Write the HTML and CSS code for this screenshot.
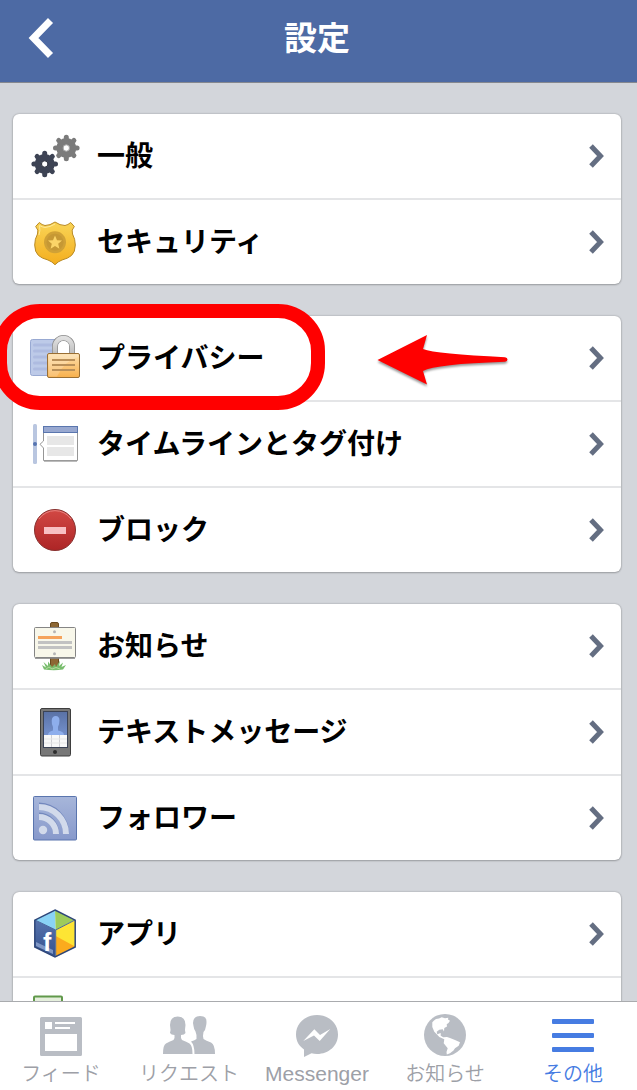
FILE: index.html
```html
<!DOCTYPE html>
<html lang="ja">
<head>
  <meta charset="UTF-8" />
  <meta name="viewport" content="width=device-width, initial-scale=1.0" />
  <title>設定</title>
  <link rel="stylesheet" href="styles.css">
</head>
<body>
  <!-- shared symbols -->
  <svg class="defs" width="0" height="0" aria-hidden="true">
    <symbol id="chevron" viewBox="0 0 15 24">
      <path d="M2 2 11.5 12 2 22" fill="none" stroke="#646e82" stroke-width="5"/>
    </symbol>
    <!-- 8 teeth round a 26px gear -->
    <symbol id="gear" viewBox="-14 -14 28 28">
      <circle r="10"/>
      <path d="M0-10.800V10.800M-10.800 0H10.800M-7.600-7.600 7.600 7.600M7.600-7.600-7.600 7.600" stroke="currentColor" stroke-width="5" stroke-linecap="round"/>
    </symbol>
    <linearGradient id="g-gold" x1="0" y1="0" x2="0" y2="1"><stop offset="0" stop-color="#f9d457"/><stop offset="1" stop-color="#f4ae1e"/></linearGradient>
    <linearGradient id="g-lock" x1="0" y1="0" x2="0" y2="1"><stop offset="0" stop-color="#fde0ae"/><stop offset="1" stop-color="#f8b04c"/></linearGradient>
    <linearGradient id="g-steel" x1="0" y1="0" x2="0" y2="1"><stop offset="0" stop-color="#e0e0e0"/><stop offset="1" stop-color="#bcbcbc"/></linearGradient>
    <linearGradient id="g-red" x1="0" y1="0" x2="0" y2="1"><stop offset="0" stop-color="#d24844"/><stop offset="1" stop-color="#ad2526"/></linearGradient>
    <linearGradient id="g-rss" x1="0" y1="0" x2="0" y2="1"><stop offset="0" stop-color="#a7b6da"/><stop offset="1" stop-color="#8799cb"/></linearGradient>
    <linearGradient id="g-screen" x1="0" y1="0" x2="0" y2="1"><stop offset="0" stop-color="#5a72a6"/><stop offset="1" stop-color="#7490cc"/></linearGradient>
    <linearGradient id="g-cube" x1="0" y1="0" x2="0" y2="1"><stop offset="0" stop-color="#5673ad"/><stop offset="1" stop-color="#34518d"/></linearGradient>
  </svg>

  <header class="header">
    <button class="back-btn" aria-label="戻る">
      <svg width="26" height="42" viewBox="0 0 26 42"><path d="M22.500 3.500 5.500 21 22.500 38.500" fill="none" stroke="#fff" stroke-width="7"/></svg>
    </button>
    <h1>設定</h1>
  </header>

  <main class="settings">
    <nav class="card">
      <a class="row" href="#">
        <svg class="icon" viewBox="0 0 50 50">
          <use class="gear-light" href="#gear" x="22.300" y="3" width="28" height="28"/>
          <circle cx="36.300" cy="17" r="3.200" fill="#fff" stroke="#a5a5a5"/>
          <use class="gear-dark" href="#gear" x="0.700" y="19" width="28" height="28"/>
          <circle cx="14.700" cy="33" r="3.200" fill="#fff" stroke="#272b38"/>
        </svg>
        <span class="label">一般</span>
        <svg class="chevron"><use href="#chevron"/></svg>
      </a>
      <a class="row" href="#">
        <svg class="icon" viewBox="0 0 50 50">
          <path d="M25 5Q20 8.500 15 8.500 12 8 9.300 5.500L5.700 9.500Q9 13 7.500 17 4.700 22 4.700 28 4.700 35 8.500 38.500 12 41.500 18 43 22 44.500 25 47.700 28 44.500 32 43 38 41.500 41.500 38.500 45.300 35 45.300 28 45.300 22 42.500 17 41 13 44.300 9.500L40.700 5.500Q38 8 35 8.500 30 8.500 25 5Z" fill="url(#g-gold)" stroke="#b98a24"/>
          <path d="M25 7Q20 10 15 10.500 12 10 9.500 8.500 10.500 14 9 18" fill="none" stroke="#fde99b"/>
          <circle cx="25" cy="25.300" r="11" fill="#d0a136"/>
          <circle cx="25" cy="25.300" r="8.500" fill="#c69834"/>
          <path d="M25 18.500 27 23.200 32 23.600 28.200 26.800 29.400 31.800 25 29.100 20.600 31.800 21.800 26.800 18 23.600 23 23.200Z" fill="#fbd468"/>
        </svg>
        <span class="label">セキュリティ</span>
        <svg class="chevron"><use href="#chevron"/></svg>
      </a>
    </nav>

    <nav class="card">
      <a class="row" href="#">
        <svg class="icon" viewBox="0 0 50 50">
          <rect x=".5" y="6.500" width="30" height="36" rx="2" fill="#bdcae8" stroke="#98a9d2"/>
          <path d="M4.500 12H24M4.500 18H24M4.500 24H24M4.500 30H24M4.500 36H24" stroke="#aebbe0" stroke-width="3" stroke-linecap="round"/>
          <path d="M25 22V13.500A8.500 8.500 0 0 1 42 13.500V22" fill="none" stroke="#8c8c8c" stroke-width="6"/>
          <path d="M25 22V13.500A8.500 8.500 0 0 1 42 13.500V22" fill="none" stroke="url(#g-steel)" stroke-width="4.500"/>
          <path d="M28 20V13.500A5.500 5.500 0 0 1 39 13.500V20Z" fill="#fff"/>
          <rect x="17.500" y="20.500" width="32" height="24" rx="1.500" fill="url(#g-lock)" stroke="#9a6f34"/>
          <path d="M18.500 21.500H48.500V24Q34 28 27 43.500H18.500Z" fill="#fff" opacity=".2"/>
          <path d="M22 27H45M22 32H45M22 37H45" stroke="#b98f58" stroke-width="1.800"/>
        </svg>
        <span class="label">プライバシー</span>
        <svg class="chevron"><use href="#chevron"/></svg>
        <span class="ring"></span>
        <svg class="arrow" viewBox="0 0 140 64">
          <path d="M7.500 30 57 5 53 19Q66 24 135 27.200 137.500 27.500 137.500 29.500 137.500 31.500 135 31.800 66 34 53 41L57 54.500Z" fill="#f00"/>
        </svg>
      </a>
      <a class="row" href="#">
        <svg class="icon" viewBox="0 0 50 50">
          <rect x="3" y="5" width="4" height="40" rx="1.500" fill="#b9c6e0"/>
          <circle cx="5" cy="25" r="2" fill="#5674b0"/>
          <path d="M13.500 7.500H47.500V41.500H13.500V29L10 25.300 13.500 22Z" fill="#fff" stroke="#969696"/>
          <path d="M14 42.300H47" stroke="#aaa"/>
          <rect x="13.500" y="7.500" width="34" height="6" fill="#98a8d0" stroke="#5a76ae"/>
          <path d="M17 17H44V26H17ZM17 28H44V37H17Z" fill="#e7e7e7"/>
        </svg>
        <span class="label">タイムラインとタグ付け</span>
        <svg class="chevron"><use href="#chevron"/></svg>
      </a>
      <a class="row" href="#">
        <svg class="icon" viewBox="0 0 50 50">
          <circle cx="25" cy="25" r="20.500" fill="url(#g-red)" stroke="#87302e"/>
          <path d="M9 14A19.500 19.500 0 0 1 41 14" fill="none" stroke="#e98480"/>
          <rect x="14" y="22" width="22" height="7" fill="#f8bfc2"/>
        </svg>
        <span class="label">ブロック</span>
        <svg class="chevron"><use href="#chevron"/></svg>
      </a>
    </nav>

    <nav class="card">
      <a class="row" href="#">
        <svg class="icon" viewBox="0 0 50 50">
          <path d="M20.500 47V3Q20.500 1.500 22 1.500H27Q28.500 1.500 28.500 3V47Z" fill="#8d6734" stroke="#69491f"/>
          <rect x="4.500" y="6.500" width="41" height="30" rx="1" fill="#f8f7ea" stroke="#858585"/>
          <path d="M5 37.300H45" stroke="#858585"/>
          <circle cx="24.500" cy="10.700" r="1.500" fill="#b5b5b5"/>
          <circle cx="24.500" cy="32.700" r="1.500" fill="#b5b5b5"/>
          <path d="M8 15H32V18H8Z" fill="#f5a35c"/>
          <path d="M8 20H42V23H8ZM8 25H42V28H8Z" fill="#c2c2c2"/>
          <path d="M14 48.500 12 44 16 46.500 13.500 41 18 45 18 40.500 22 46 25 43 26 46 30 39.500 29 45 33 41.500 31.500 46 36 44 33 48.500Q24 50 14 48.500Z" fill="#78bd6d"/>
          <path d="M16 48 19 46 22 48 26 46.500 30 48" fill="none" stroke="#b5dc9d"/>
        </svg>
        <span class="label">お知らせ</span>
        <svg class="chevron"><use href="#chevron"/></svg>
      </a>
      <a class="row" href="#">
        <svg class="icon" viewBox="0 0 50 50">
          <rect x="10.500" y="1.500" width="30" height="47.500" rx="1.500" fill="#777" stroke="#3e3e3e"/>
          <rect x="13" y="4" width="25" height="37" fill="#3b4356"/>
          <rect x="14" y="5" width="23" height="23" fill="url(#g-screen)"/>
          <path d="M18 28Q18 24.500 23 23.500V20Q21.500 17 21.700 13.500 22 9 25.700 9 29.500 9 29.500 13.500 29.500 17 28 20V23.500Q34 24.500 34 28Z" fill="#8eaeec"/>
          <rect x="14" y="28" width="23" height="12" fill="#f8f8f8"/>
          <path d="M21.500 28V40M29.500 28V40" stroke="#cfcfd4"/>
          <path d="M14 32H37M14 36H37" stroke="#e6e6e6"/>
          <circle cx="25" cy="45" r="2" fill="#2d2d2d"/>
        </svg>
        <span class="label">テキストメッセージ</span>
        <svg class="chevron"><use href="#chevron"/></svg>
      </a>
      <a class="row" href="#">
        <svg class="icon" viewBox="0 0 50 50">
          <rect x="3.500" y="3.500" width="43" height="43.500" rx="1" fill="url(#g-rss)" stroke="#5a75ae"/>
          <path d="M9 12.500A27.500 27.500 0 0 1 36 40M9 22.500A17.500 17.500 0 0 1 26 40" fill="none" stroke="#7388bd" stroke-width="6"/>
          <path d="M9 14A27 27 0 0 1 36 41M9 24A17 17 0 0 1 26 41" fill="none" stroke="#d2daeb" stroke-width="6"/>
          <circle cx="13" cy="37" r="4.200" fill="#d2daeb"/>
        </svg>
        <span class="label">フォロワー</span>
        <svg class="chevron"><use href="#chevron"/></svg>
      </a>
    </nav>

    <nav class="card">
      <a class="row" href="#">
        <svg class="icon" viewBox="0 0 50 50">
          <path d="M25 1 5 11 25.700 21Z" fill="#8ad3f5"/>
          <path d="M25 1 45 11 25.700 21Z" fill="#9dcb5b"/>
          <path d="M5 11 25.700 21V48L5 38Z" fill="url(#g-cube)"/>
          <path d="M25.700 21 45 11V38L25.700 48Z" fill="#fde534"/>
          <path d="M25.700 27 45 37.500V38L25.700 48Z" fill="#fbab1d"/>
          <path d="M6 33 23 41V45L6 37Z" fill="#7f97c5"/>
          <text class="cube-f" x="13" y="42">f</text>
          <path d="M5 11 25.700 21 45 11M25.700 21V47.500" fill="none" stroke="#4a699f"/>
          <path d="M25 1 45.200 11.200V38L25 48 4.800 38V11.200Z" fill="none" stroke="#2f477a" stroke-width="1.500"/>
        </svg>
        <span class="label">アプリ</span>
        <svg class="chevron"><use href="#chevron"/></svg>
      </a>
      <div class="row">
        <svg class="icon" viewBox="0 0 50 50">
          <rect x="4" y="1.500" width="28" height="46" rx="1" fill="#e5efdc" stroke="#61994b" stroke-width="2"/>
        </svg>
      </div>
    </nav>
  </main>

  <nav class="tabbar">
    <a class="tab" href="#">
      <svg viewBox="0 0 56 44">
        <path fill-rule="evenodd" d="M8.500 4H47.500Q49 4 49 5.500V41.500Q49 43 47.500 43H8.500Q7 43 7 41.500V5.500Q7 4 8.500 4ZM12 9V16H19V9ZM22 9V11H42V9ZM22 14V16H37V14ZM12 21V38H44V21Z"/>
      </svg>
      <span>フィード</span>
    </a>
    <a class="tab" href="#">
      <svg viewBox="0 0 56 44">
        <path d="M2 41Q2 32 5 30.500 8 28.500 12.500 27 14 25.500 13.500 22Q10 22 9 20 10 17 9 12 9 3.500 16.700 3.500 24.500 3.500 24.500 12 23.500 17 24.500 20 23.500 22 20 22 19.500 25.500 21 27 25.500 28.500 28.500 30.500 31.500 32.500 31.500 41Z"/>
        <path d="M33.500 41Q33.500 32 30 28.500 34 27 35.500 26 36 22 34.500 18.500 33 17 32.500 13 31.500 10 32.500 7 34 3 39 3 46 3 45.500 9 45.500 11 45 13 44.500 17 42.500 19 41.500 23 42.500 26 45 27.500 50 29.500 54 31.500 54 41Z"/>
      </svg>
      <span>リクエスト</span>
    </a>
    <a class="tab" href="#">
      <svg viewBox="0 0 56 44">
        <path d="M28 2C16 2 7 10.500 7 21.500 7 28 10 33 15 36.500V44L22.500 40.200Q25 41 28 41C40 41 49 32.500 49 21.500 49 10.500 40 2 28 2Z"/>
        <path d="M14.300 28 25.300 16.300 31 22 41.300 16 30.700 28 25 22.500Z" fill="#fff"/>
      </svg>
      <span class="latin">Messenger</span>
    </a>
    <a class="tab" href="#">
      <svg viewBox="0 0 56 44">
        <circle cx="28" cy="22" r="21"/>
        <path d="M15.300 9.300 17 7.500 19 6 22 5.500 24.700 4.300 28 5.300 31.300 4.800 31 6.500 33 7.700 31.500 10 29.700 11.300 30 13.500 27.300 15 27 18.500 25.700 16.300 22.300 16.700 19.700 18.700 20.300 21.300 23.700 20 23.700 22.700 26.300 24.300 30 24 33 25 38 27 43 29.300 41.700 32.700 38 35.300 36.500 37.500 33 40.300 29.800 41.500 29.500 39 30.700 35.300 26.700 30.300 27.300 26.300 22.300 24 20 21.500 17.300 18.700 15.300 14Z" fill="#fff"/>
      </svg>
      <span>お知らせ</span>
    </a>
    <a class="tab active" href="#">
      <svg viewBox="0 0 56 44">
        <rect x="7" y="6" width="42" height="5" rx="1"/>
        <rect x="7" y="20" width="42" height="5" rx="1"/>
        <rect x="7" y="34" width="42" height="5" rx="1"/>
      </svg>
      <span>その他</span>
    </a>
  </nav>
</body>
</html>
```
FILE: styles.css
```css
* {
  box-sizing: border-box;
}
body {
  margin: 0;
  height: 100vh;
  display: flex;
  flex-direction: column;
  overflow: hidden;
  background-color: #d3d6db;
  font-family: "Noto Sans CJK JP", sans-serif;
}
.defs {
  position: absolute;
}
.header {
  display: grid;
  grid-template-columns: 80px 1fr 80px;
  align-items: center;
  flex-shrink: 0;
  height: 83px;
  margin-left: -3px;
  padding-bottom: 6px;
  background-color: #4d6aa4;
  border-bottom: 1px solid #85888f;
  color: #fff;
}
.header h1 {
  margin: 0;
  padding-bottom: 4px;
  font-size: 33px;
  line-height: 48px;
  font-weight: 700;
  text-align: center;
}
.back-btn {
  display: flex;
  padding: 0 0 0 31px;
  background: none;
  border: none;
  cursor: pointer;
}
.settings {
  flex: 1;
  min-height: 0;
  overflow: hidden;
  padding: 31px 16px 0 13px;
}
.card {
  margin-bottom: 32px;
  background-color: #fff;
  border-radius: 6px;
  box-shadow: 0 0 2px rgba(0,0,0,0.3), 0 1px 2px rgba(0,0,0,0.2);
}
.row {
  position: relative;
  display: flex;
  align-items: center;
  gap: 17px;
  height: 84px;
  padding: 0 17px;
  color: #000;
  text-decoration: none;
}
.row + .row {
  height: 86px;
  border-top: 2px solid #e4e5e7;
}
.icon {
  flex-shrink: 0;
  width: 50px;
  height: 50px;
}
.label {
  flex: 1;
  padding-bottom: 4px;
  font-size: 28px;
  line-height: 40px;
  font-weight: 700;
}
.chevron {
  width: 15px;
  height: 24px;
}
.gear-light {
  color: #7b7b7b;
  fill: #7b7b7b;
}
.gear-dark {
  color: #3d4354;
  fill: #3d4354;
}
.cube-f {
  font-family: "Liberation Sans", sans-serif;
  font-size: 25px;
  font-weight: 700;
  fill: #fff;
}
/* red marker over the privacy row */
.ring {
  position: absolute;
  z-index: 1;
  left: -20px;
  top: -12px;
  width: 332px;
  height: 106px;
  border: 14px solid #f00;
  border-radius: 47px;
}
.arrow {
  position: absolute;
  left: 357px;
  top: 14px;
  width: 140px;
  height: 64px;
  filter: drop-shadow(0 2px 1px rgba(0,0,0,0.4));
}
.tabbar {
  display: grid;
  grid-template-columns: repeat(5, 1fr);
  flex-shrink: 0;
  height: 89px;
  margin-left: -3px;
  border-top: 1px solid #a9abae;
  background-color: #fff;
}
.tab {
  display: flex;
  flex-direction: column;
  align-items: center;
  padding-top: 11px;
  color: #9da0a7;
  font-size: 20px;
  line-height: 32px;
  font-weight: 350;
  text-decoration: none;
}
.tab svg {
  width: 56px;
  height: 44px;
  fill: #b9bdc4;
}
.tab .latin {
  padding-top: 1px;
  font-family: "Liberation Sans", sans-serif;
  font-size: 21px;
  font-weight: 400;
}
.tab.active {
  color: #467ce2;
}
.tab.active svg {
  fill: #467ce2;
}
```
